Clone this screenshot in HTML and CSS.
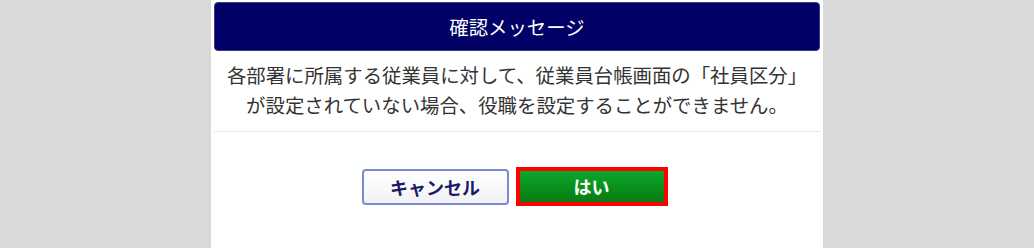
FILE: index.html
```html
<!DOCTYPE html>
<html lang="ja">
<head>
<meta charset="utf-8">
<link rel="stylesheet" href="styles.css">
</head>
<body>
<div class="dialog">
  <div class="dialog-header">確認メッセージ</div>
  <div class="dialog-body">
    <p class="message">各部署に所属する従業員に対して、従業員台帳画面の「社員区分」<br>が設定されていない場合、役職を設定することができません。</p>
  </div>
  <div class="dialog-actions">
    <button class="btn btn-cancel">キャンセル</button>
    <button class="btn btn-yes"><span class="btn-yes-inner">はい</span></button>
  </div>
</div>
</body>
</html>
```
FILE: styles.css
```css
html, body {
  margin: 0;
  padding: 0;
  height: 100%;
}
body {
  background: #d9d9d9;
  font-family: "Noto Sans CJK JP", "Noto Sans", sans-serif;
}
.dialog {
  width: 606px;
  margin: 0 auto;
  padding: 2px 3px 0;
  background: #ffffff;
  height: 246px;
}
.dialog-header {
  height: 47px;
  background: #000066;
  border: 1px solid #3b3b8c;
  border-radius: 4px;
  color: #ffffff;
  font-size: 19.4px;
  line-height: 47px;
  text-align: center;
}
.dialog-body {
  padding: 9px 0 11px;
  border-bottom: 1px solid #e6e6e6;
}
.message {
  margin: 0;
  color: #333333;
  font-size: 19.4px;
  line-height: 30px;
  text-align: center;
}
.dialog-actions {
  display: flex;
  justify-content: center;
  align-items: center;
  gap: 7px;
  padding-top: 35px;
  padding-right: 5px;
}
.btn {
  font-family: "Noto Sans CJK JP", "Noto Sans", sans-serif;
  font-weight: bold;
  font-size: 18px;
  margin: 0;
  cursor: pointer;
}
.btn-cancel {
  width: 147px;
  height: 36px;
  border: 2px solid #7b8bd1;
  border-radius: 4px;
  background: linear-gradient(#ffffff, #f1f2f6);
  color: #1a1a66;
  padding: 0;
}
.btn-yes {
  width: 152px;
  height: 39px;
  border: 4px solid #ff0000;
  padding: 0;
  background: linear-gradient(#0aa82a, #0a7a12);
  color: #ffffff;
}
.btn-yes-inner {
  display: block;
  line-height: 31px;
}
```
